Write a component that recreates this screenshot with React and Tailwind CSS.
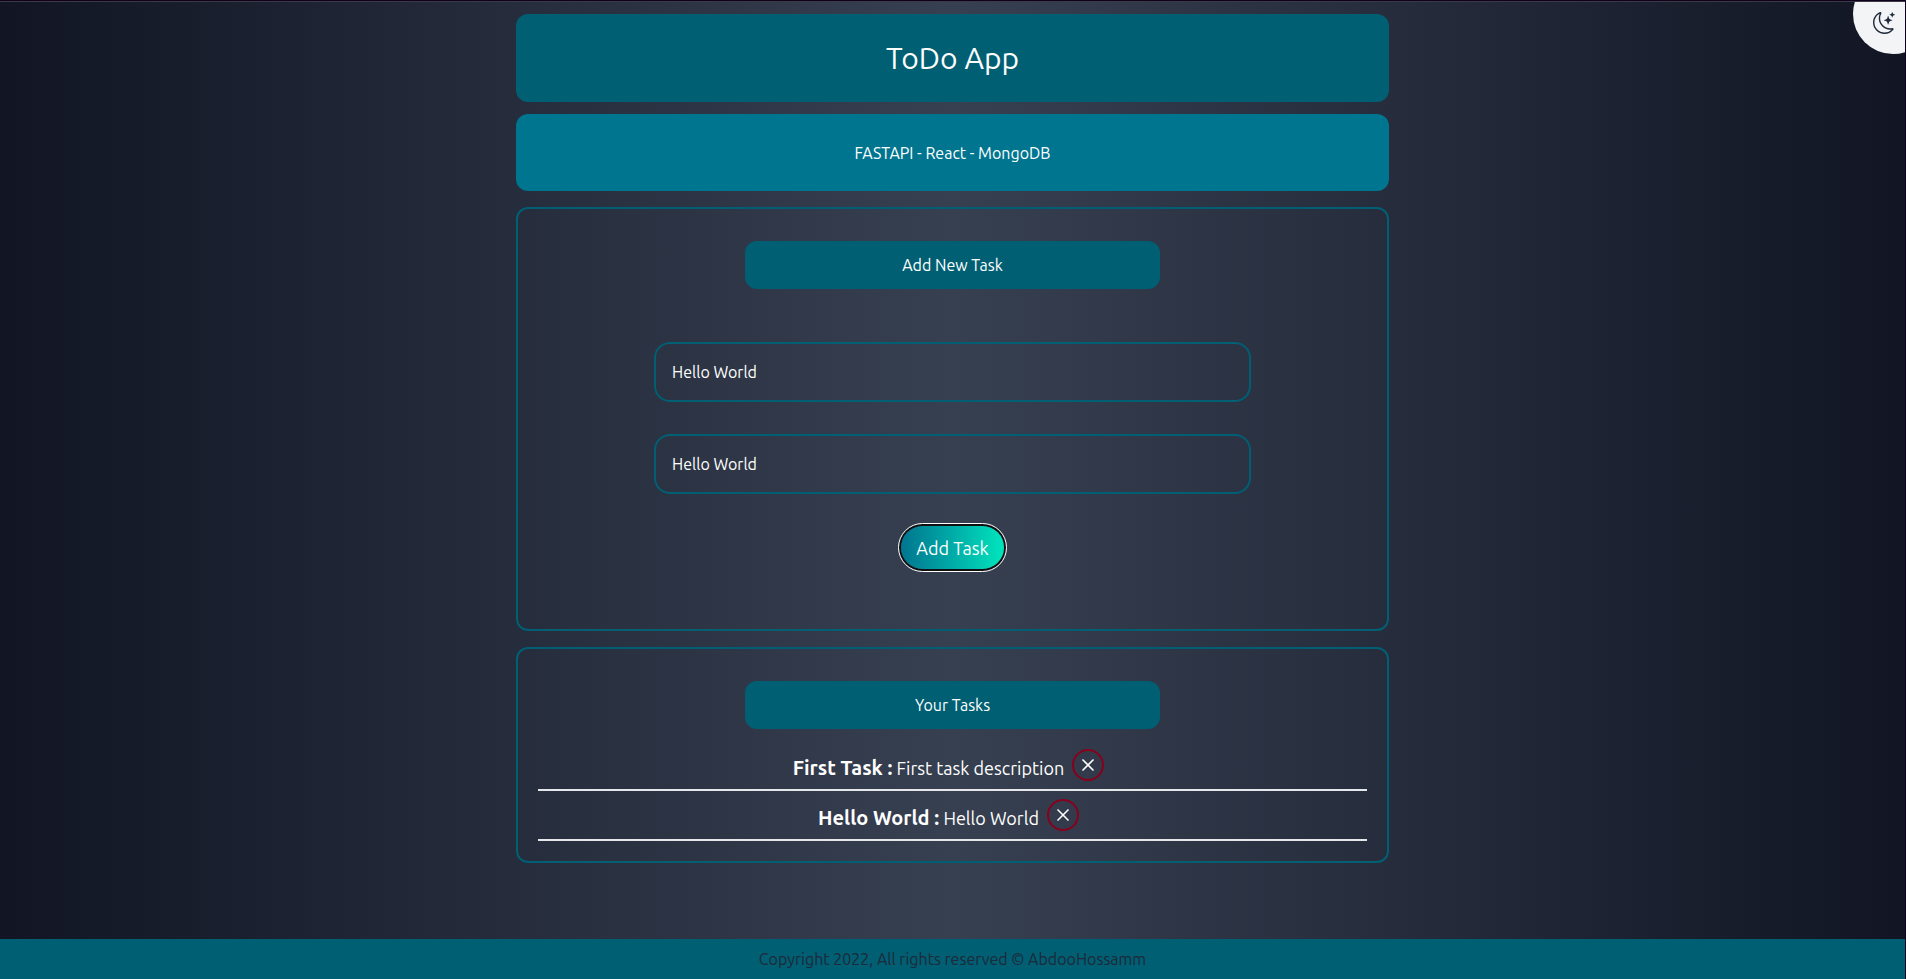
import { X } from "lucide-react";
import { BsMoonStars } from "react-icons/bs";

const initialTasks = [
  { title: "First Task", description: "First task description" },
  { title: "Hello World", description: "Hello World" },
];

function Heading({ children }) {
  return (
    <h2 className="mx-auto flex h-12 w-1/2 items-center justify-center rounded-xl bg-[#005f73]">
      {children}
    </h2>
  );
}

function TextField({ label, name }) {
  return (
    <input
      type="text"
      name={name}
      aria-label={label}
      defaultValue="Hello World"
      className="h-15 w-full rounded-2xl border-2 border-[#005f73] bg-transparent px-4 text-white outline-none"
    />
  );
}

function ThemeToggle() {
  return (
    <button
      type="button"
      aria-label="Toggle theme"
      className="absolute -top-7 -right-7 flex size-20 items-end rounded-full bg-gray-100 pb-5 pl-5 text-gray-800"
    >
      <BsMoonStars className="size-[22px]" />
    </button>
  );
}

function Task({ title, description }) {
  return (
    <li className="flex h-[50px] items-center justify-center border-b-2 border-gray-200">
      <p className="pt-1.5 text-lg">
        <strong className="text-xl font-bold">{title} :</strong> {description}
      </p>
      <button
        type="button"
        aria-label={`Delete ${title}`}
        className="mx-2 flex size-8 items-center justify-center rounded-full border-2 border-[#88001b]"
      >
        <X className="size-5" strokeWidth={2} />
      </button>
    </li>
  );
}

export default function App() {
  return (
    <div className="border-t border-r border-[#0f0020] bg-[#0f0020]">
      <div className="relative flex min-h-[calc(100vh-1px)] flex-col overflow-hidden border-t border-[#3a3a40] bg-linear-to-r/srgb from-[#111524] via-[#374051] to-[#111524] font-['Ubuntu','Noto_Sans',sans-serif] text-base text-white">
        <ThemeToggle />
        <main className="mx-auto flex w-11/24 grow flex-col pt-3">
          <h1 className="flex h-22 items-center justify-center rounded-xl bg-[#005f73] text-3xl">ToDo App</h1>
          <p className="mt-3 flex h-[77px] items-center justify-center rounded-xl bg-[#00758f]">
            FASTAPI - React - MongoDB
          </p>
          <section className="mt-4 rounded-xl border-2 border-[#005f73] px-5 pt-8 pb-15">
            <Heading>Add New Task</Heading>
            <form className="mx-auto mt-[53px] flex w-[72%] flex-col items-center gap-8" onSubmit={(e) => e.preventDefault()}>
              <TextField label="Task title" name="title" />
              <TextField label="Task description" name="description" />
              <button
                type="submit"
                className="h-[43px] rounded-full bg-linear-to-r from-[#00758f] to-[#00e5bd] px-[15px] text-lg ring-2 ring-[#101010] outline-1 outline-offset-2 outline-white"
              >
                Add Task
              </button>
            </form>
          </section>
          <section className="mt-4 rounded-xl border-2 border-[#005f73] px-5 pt-8 pb-5">
            <Heading>Your Tasks</Heading>
            <ul className="mt-3">
              {initialTasks.map((task) => (
                <Task key={task.title} {...task} />
              ))}
            </ul>
          </section>
        </main>
        <footer className="flex h-10 items-center justify-center bg-[#005f73] text-gray-800">
          Copyright 2022, All rights reserved © AbdooHossamm
        </footer>
      </div>
    </div>
  );
}
